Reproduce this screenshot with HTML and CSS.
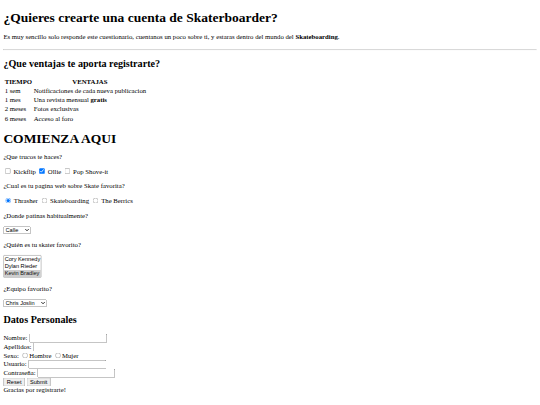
FILE: index.html
```html
<!DOCTYPE html>
<html lang="es">
<head>
<meta charset="utf-8">
<title>Skaterboarder</title>
<link rel="stylesheet" href="styles.css">
</head>
<body>
<div class="page">
<h1 class="title">¿Quieres crearte una cuenta de Skaterboarder?</h1>
<p class="intro">Es muy sencillo solo responde este cuestionario, cuentanos un poco sobre ti, y estaras dentro del mundo del <b>Skateboarding</b>.</p>
<hr class="rule">
<h2 class="section section-first">¿Que ventajas te aporta registrarte?</h2>
<table class="benefits">
<tr><th>TIEMPO</th><th>VENTAJAS</th></tr>
<tr><td>1 sem</td><td>Notificaciones de cada nueva publicacion</td></tr>
<tr><td>1 mes</td><td>Una revista mensual <b>gratis</b></td></tr>
<tr><td>2 meses</td><td>Fotos exclusivas</td></tr>
<tr><td>6 meses</td><td>Acceso al foro</td></tr>
</table>
<h1 class="start">COMIENZA AQUI</h1>
<form class="quiz">
<p>¿Que trucos te haces?</p>
<p><input type="checkbox"> Kickflip <input type="checkbox" checked> Ollie <input type="checkbox"> Pop Shove-it</p>
<p>¿Cual es tu pagina web sobre Skate favorita?</p>
<p><input type="radio" name="web" checked> Thrasher <input type="radio" name="web"> Skateboarding <input type="radio" name="web"> The Berrics</p>
<p>¿Donde patinas habitualmente?</p>
<p><select><option>Calle</option><option>Parque</option></select></p>
<p>¿Quién es tu skater favorito?</p>
<p><select size="3"><option>Cory Kennedy</option><option>Dylan Rieder</option><option selected>Kevin Bradley</option></select></p>
<p>¿Equipo favorito?</p>
<p><select><option>Chris Joslin</option><option>Nyjah Huston</option></select></p>
</form>
<h2 class="section">Datos Personales</h2>
<form class="datos">
Nombre: <input type="text"><br>
Apellidos: <input type="text"><br>
Sexo: <input type="radio" name="sexo">Hombre <input type="radio" name="sexo">Mujer<br>
Usuario: <input type="text"><br>
Contraseña: <input type="password"><br>
<input type="reset" value="Reset"> <input type="submit" value="Submit"><br>
Gracias por registrarte!
</form>
</div>
</body>
</html>
```
FILE: styles.css
```css
html,
body {
  margin: 0;
  overflow: hidden;
  background: #fff;
}
.page {
  width: 1264px;
  padding: 8px;
  transform: scale(0.421875);
  transform-origin: 0 0;
  color: #000;
  font-family: "Liberation Serif", "Times New Roman", serif;
}
.title,
.start,
.section,
.intro,
.benefits,
.quiz,
.datos {
  font-family: "Liberation Serif", "Times New Roman", serif;
}
.title {
  font-size: 32px;
  margin: 14px 0 19px;
}
.intro {
  margin: 16px 0;
}
.rule {
  margin: 21px 0 8px;
}
.section {
  font-size: 24px;
  margin: 15px 0 20px;
}
.section-first {
  margin: 18px 0 17px;
}
.start {
  font-size: 32px;
  margin: 16px 0 16px;
}
.quiz p {
  margin: 16px 0;
}
```
